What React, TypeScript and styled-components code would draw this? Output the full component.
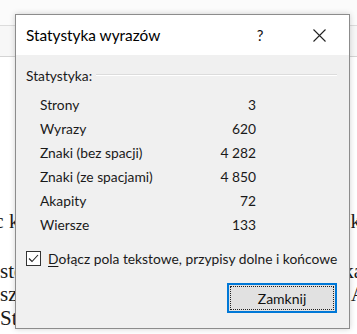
import React from "react";
import styled, { createGlobalStyle } from "styled-components";

const UI = `"Segoe UI", Lato, "Noto Sans", sans-serif`;

const GlobalStyle = createGlobalStyle`
  html, body { margin: 0; padding: 0; background: #ffffff; overflow: hidden; }
  #root { width: 357px; height: 334px; }
`;

const Screen = styled.div`
  position: relative;
  width: 357px;
  height: 334px;
  overflow: hidden;
  background: #ffffff;
`;

const Ribbon = styled.div`
  height: 56px;
  background: #f7f7f7;
  border-bottom: 1px solid #d4d4d4;
`;

const RibbonStrip = styled.div`
  height: 25px;
  background: #fbfbfb;
  border-bottom: 1px solid #dcdcdc;
`;

const Doc = styled.div`
  display: flex;
  flex-direction: column;
  padding-top: 153px;
  font-family: "Liberation Serif", serif;
  font-size: 21px;
  color: #1b1b1b;
  line-height: 23.5px;
`;

const DocLine = styled.div<{ $gap?: number }>`
  display: flex;
  justify-content: space-between;
  white-space: nowrap;
  margin-top: ${(p) => p.$gap ?? 0}px;
`;

const DocLeft = styled.span<{ $shift: number }>`
  margin-left: ${(p) => p.$shift}px;
`;

const DocRight = styled.span<{ $shift: number }>`
  margin-right: ${(p) => p.$shift}px;
`;

const Dialog = styled.div`
  position: absolute;
  left: 15px;
  top: 14px;
  width: 333px;
  height: 313px;
  border: 1px solid #8c8c8c;
  background: #f0f0f0;
  box-shadow: 0 0 6px rgba(0, 0, 0, 0.18);
  display: flex;
  flex-direction: column;
  font-family: ${UI};
  color: #1a1a1a;
`;

const TitleBar = styled.div`
  height: 40px;
  background: #ffffff;
  display: flex;
  align-items: center;
  padding-left: 10px;
  padding-right: 10px;
`;

const Title = styled.div`
  flex: 1;
  font-size: 15.4px;
  color: #000;
  padding-bottom: 1px;
`;

const CaptionButton = styled.div<{ $w: number }>`
  width: ${(p) => p.$w}px;
  height: 40px;
  display: flex;
  align-items: center;
  justify-content: center;
  font-size: 15px;
  color: #111;
`;

const Spacer = styled.div<{ $w: number }>`
  width: ${(p) => p.$w}px;
`;

const Body = styled.div`
  flex: 1;
  display: flex;
  flex-direction: column;
  padding: 12px 12px 0 10px;
  font-size: 13.8px;
`;

const GroupHeader = styled.div`
  display: flex;
  align-items: center;
  height: 16px;
  gap: 4px;
`;

const GroupLine = styled.div`
  flex: 1;
  height: 1px;
  background: #dcdcdc;
  border-bottom: 1px solid #ffffff;
`;

const Rows = styled.div`
  display: flex;
  flex-direction: column;
  padding-top: 9px;
  padding-left: 14px;
`;

const Row = styled.div`
  display: grid;
  grid-template-columns: 156px 60px;
  height: 24px;
  align-items: center;
`;

const Value = styled.span`
  text-align: right;
`;

const CheckRow = styled.label`
  display: flex;
  align-items: center;
  gap: 7px;
  margin-top: 15px;
  height: 14px;
  white-space: nowrap;
`;

const Box = styled.span`
  width: 13px;
  height: 13px;
  border: 1px solid #333;
  background: #ffffff;
  display: flex;
  align-items: center;
  justify-content: center;
  flex: none;
`;

const Mnemonic = styled.span`
  text-decoration: underline;
  text-underline-offset: 2px;
`;

const Footer = styled.div`
  display: flex;
  justify-content: flex-end;
  margin-top: 18px;
`;

const Button = styled.div`
  width: 110px;
  height: 30px;
  box-sizing: border-box;
  border: 2px solid #0078d7;
  background: #e1e1e1;
  padding: 1px;
  display: flex;
`;

const Focus = styled.div`
  flex: 1;
  border: 1px dotted #222;
  display: flex;
  align-items: center;
  justify-content: center;
  font-size: 14px;
  color: #111;
`;

const stats: [string, string][] = [
  ["Strony", "3"],
  ["Wyrazy", "620"],
  ["Znaki (bez spacji)", "4 282"],
  ["Znaki (ze spacjami)", "4 850"],
  ["Akapity", "72"],
  ["Wiersze", "133"],
];

export default function App() {
  return (
    <>
      <GlobalStyle />
      <Screen>
        <Ribbon>
          <RibbonStrip />
        </Ribbon>
        <Doc>
          <DocLine>
            <DocLeft $shift={-15}>ac k</DocLeft>
            <DocRight $shift={-4}>k</DocRight>
          </DocLine>
          <DocLine $gap={26}>
            <DocLeft $shift={0}>sto</DocLeft>
            <DocRight $shift={-6}>ka</DocRight>
          </DocLine>
          <DocLine>
            <DocLeft $shift={0}>sz</DocLeft>
            <DocRight $shift={-9}>A</DocRight>
          </DocLine>
          <DocLine>
            <DocLeft $shift={0}>St</DocLeft>
            <DocRight $shift={0}> </DocRight>
          </DocLine>
        </Doc>
        <Dialog>
          <TitleBar>
            <Title>Statystyka wyrazów</Title>
            <CaptionButton $w={40}>?</CaptionButton>
            <Spacer $w={19} />
            <CaptionButton $w={40}>
              <svg width="13" height="13" viewBox="0 0 13 13">
                <path d="M0.5 0.5 L12.5 12.5 M12.5 0.5 L0.5 12.5" stroke="#222" strokeWidth="1.1" fill="none" />
              </svg>
            </CaptionButton>
          </TitleBar>
          <Body>
            <GroupHeader>
              <span>Statystyka:</span>
              <GroupLine />
            </GroupHeader>
            <Rows>
              {stats.map(([k, v]) => (
                <Row key={k}>
                  <span>{k}</span>
                  <Value>{v}</Value>
                </Row>
              ))}
            </Rows>
            <CheckRow>
              <Box>
                <svg width="11" height="9" viewBox="0 0 11 9">
                  <path d="M1 4.5 L4 7.5 L10 1" stroke="#222" strokeWidth="1.1" fill="none" />
                </svg>
              </Box>
              <span>
                <Mnemonic>D</Mnemonic>ołącz pola tekstowe, przypisy dolne i końcowe
              </span>
            </CheckRow>
            <Footer>
              <Button>
                <Focus>Zamknij</Focus>
              </Button>
            </Footer>
          </Body>
        </Dialog>
      </Screen>
    </>
  );
}
